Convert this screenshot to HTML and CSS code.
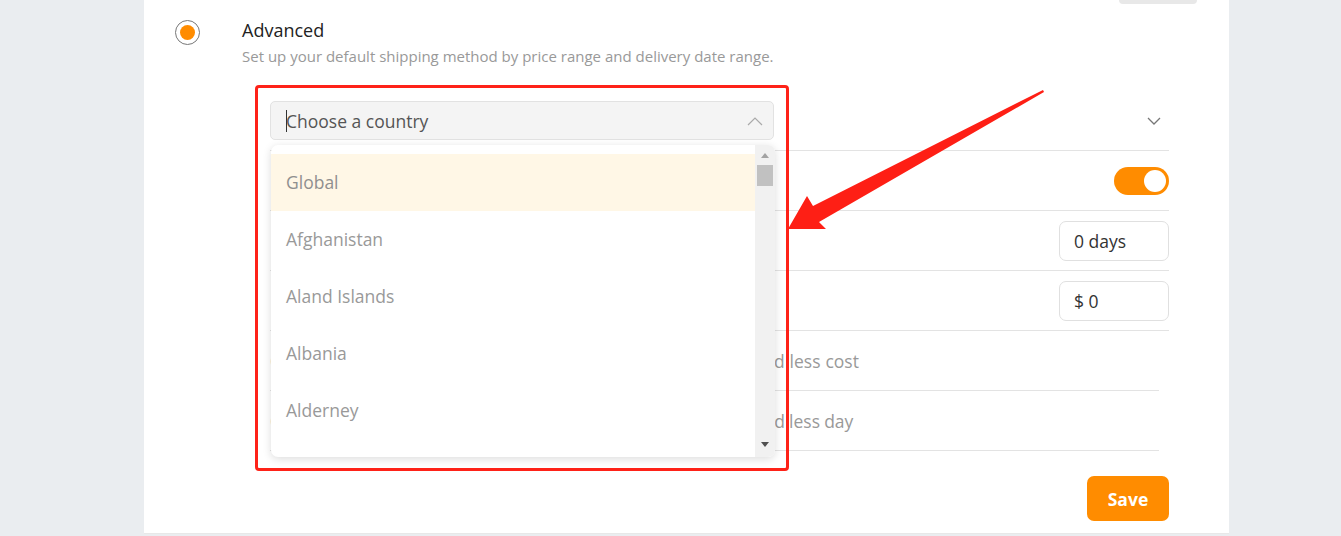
FILE: index.html
```html
<!DOCTYPE html>
<html lang="en">
<head>
<meta charset="UTF-8">
<meta name="viewport" content="width=device-width,initial-scale=1">
<title>Shipping settings</title>
<link rel="stylesheet" href="styles.css">
</head>
<body>

<div class="card">
	<div class="prev-btn"></div>

	<div class="option">
		<span class="radio checked"></span>
		<div class="option-body">
			<h3 class="option-title">Advanced</h3>
			<p class="option-desc">Set up your default shipping method by price range and delivery date range.</p>

			<div class="rules">
				<div class="rule">
					<div class="select">
						<span class="caret"></span>Choose a country
						<svg class="select-arrow" viewBox="0 0 16 9"><path d="M1 8 L8 1 L15 8"/></svg>
					</div>
					<svg class="collapse" viewBox="0 0 14 8"><path d="M1 1 L7 7 L13 1"/></svg>
				</div>
				<div class="rule">
					<span class="rule-label"></span>
					<span class="switch on"><span class="knob"></span></span>
				</div>
				<div class="rule">
					<span class="rule-label"></span>
					<input class="num-input" type="text" value="0 days">
				</div>
				<div class="rule">
					<span class="rule-label"></span>
					<input class="num-input" type="text" value="$ 0">
				</div>
				<div class="rule rule-short">
					<span class="rule-label loose">Choose the lowest shipping cost method with faster speed and less cost</span>
				</div>
				<div class="rule rule-short">
					<span class="rule-label tight">Choose the fastest delivery method with the cheapest price and less day</span>
				</div>

				<div class="dropdown">
					<ul class="dropdown-list">
						<li class="active">Global</li>
						<li>Afghanistan</li>
						<li>Aland Islands</li>
						<li>Albania</li>
						<li>Alderney</li>
					</ul>
					<div class="scrollbar">
						<span class="sb-up"></span>
						<span class="sb-thumb"></span>
						<span class="sb-down"></span>
					</div>
				</div>
			</div>

			<div class="actions">
				<button class="btn-save">Save</button>
			</div>
		</div>
	</div>
</div>

<div class="mark-box"></div>
<svg class="mark-arrow" viewBox="0 0 1341 536">
	<polygon points="1043,90 813,206 807,196 788,229 826,229 819,222 1044,92"/>
</svg>

</body>
</html>
```

FILE: styles.css
```css
* {
	box-sizing: border-box;
}
body {
	margin: 0;
	background: #eaedf0;
	font-family: "Open Sans", "Liberation Sans", sans-serif;
	color: #333;
	height: 536px;
	overflow: hidden;
}

.card {
	width: 1085px;
	margin-left: 144px;
	background: #fff;
	padding-bottom: 12px;
	border-bottom: 1px solid #e8e8e8;
}
.prev-btn {
	width: 78px;
	height: 4px;
	margin-left: 975px;
	background: #e8e8e8;
	border-radius: 0 0 8px 8px;
}

.option {
	display: flex;
	align-items: flex-start;
	gap: 42px;
	margin-top: 14px;
	padding-left: 31px;
}
.radio {
	flex: none;
	width: 25px;
	height: 25px;
	margin-top: 2px;
	border: 1px solid #777;
	border-radius: 50%;
	display: flex;
	align-items: center;
	justify-content: center;
}
.radio.checked::after {
	content: "";
	width: 15px;
	height: 15px;
	border-radius: 50%;
	background: #ff8c00;
}

.option-body {
	flex: 1;
}
.option-title {
	margin: 0;
	font-size: 18px;
	font-weight: 400;
	line-height: 24px;
	color: #222;
}
.option-desc {
	margin: 3px 0 0;
	font-size: 15px;
	line-height: 22px;
	color: #999;
}

.rules {
	position: relative;
	width: 899px;
	margin: 24px 0 0 28px;
}
.rule {
	display: flex;
	align-items: center;
	justify-content: space-between;
	height: 60px;
	border-bottom: 1px solid #e3e3e3;
}
.rule-short {
	margin-right: 10px;
}
.rule-label {
	font-size: 17.5px;
	color: #999;
	white-space: nowrap;
}
.rule-label.loose {
	word-spacing: .35px;
}
.rule-label.tight {
	word-spacing: -.4px;
}

.select {
	position: relative;
	display: flex;
	align-items: center;
	width: 504px;
	height: 39px;
	padding-left: 15px;
	background: #f4f4f4;
	border: 1px solid #e2e2e2;
	border-radius: 5px;
	font-size: 17.5px;
	color: #555;
}
.caret {
	width: 1px;
	height: 22px;
	margin-right: -1px;
	background: #333;
}
.select-arrow {
	position: absolute;
	right: 10px;
	top: 15px;
	width: 16px;
	height: 9px;
	fill: none;
	stroke: #aaa;
	stroke-width: 1.2;
}
.collapse {
	width: 14px;
	height: 8px;
	margin-right: 8px;
	fill: none;
	stroke: #777;
	stroke-width: 1.3;
}

.switch {
	position: relative;
	width: 55px;
	height: 28px;
	border-radius: 14px;
	background: #ff8c00;
}
.switch .knob {
	position: absolute;
	right: 3px;
	top: 3px;
	width: 22px;
	height: 22px;
	border-radius: 50%;
	background: #fff;
}

.num-input {
	width: 110px;
	height: 40px;
	padding: 0 14px;
	border: 1px solid #e0e0e0;
	border-radius: 7px;
	font: 17.5px "Open Sans", "Liberation Sans", sans-serif;
	color: #333;
	outline: none;
}

.dropdown {
	position: absolute;
	top: 54px;
	left: 1px;
	width: 504px;
	height: 312px;
	display: flex;
	background: #fff;
	border-radius: 7px;
	box-shadow: 0 2px 8px rgba(0, 0, 0, .14);
	overflow: hidden;
}
.dropdown-list {
	flex: 1;
	margin: 0;
	padding: 9px 0 0;
	list-style: none;
	overflow: hidden;
}
.dropdown-list li {
	height: 57px;
	line-height: 57px;
	padding-left: 15px;
	font-size: 17.5px;
	color: #999;
}
.dropdown-list li.active {
	background: #fff7e6;
	color: #8f8f8f;
}

.scrollbar {
	position: relative;
	flex: none;
	width: 20px;
	background: #f1f1f1;
}
.sb-up,
.sb-down {
	position: absolute;
	left: 6px;
	width: 0;
	height: 0;
	border-left: 4px solid transparent;
	border-right: 4px solid transparent;
}
.sb-up {
	top: 8px;
	border-bottom: 5px solid #a3a3a3;
}
.sb-down {
	bottom: 10px;
	border-top: 5px solid #505050;
}
.sb-thumb {
	position: absolute;
	left: 2px;
	top: 20px;
	width: 16px;
	height: 21px;
	background: #c1c1c1;
}

.actions {
	display: flex;
	justify-content: flex-end;
	width: 899px;
	margin: 25px 0 0 28px;
}
.btn-save {
	width: 82px;
	height: 45px;
	border: 0;
	border-radius: 7px;
	background: #ff8c00;
	color: #fff;
	font: 700 17.5px "Open Sans", "Liberation Sans", sans-serif;
	cursor: pointer;
}

/* annotation overlay */
.mark-box {
	position: absolute;
	left: 255px;
	top: 85px;
	width: 534px;
	height: 386px;
	border: 3px solid #fe2218;
	border-radius: 4px;
	pointer-events: none;
}
.mark-arrow {
	position: absolute;
	left: 0;
	top: 0;
	width: 1341px;
	height: 536px;
	fill: #fe1f15;
	pointer-events: none;
}
```
